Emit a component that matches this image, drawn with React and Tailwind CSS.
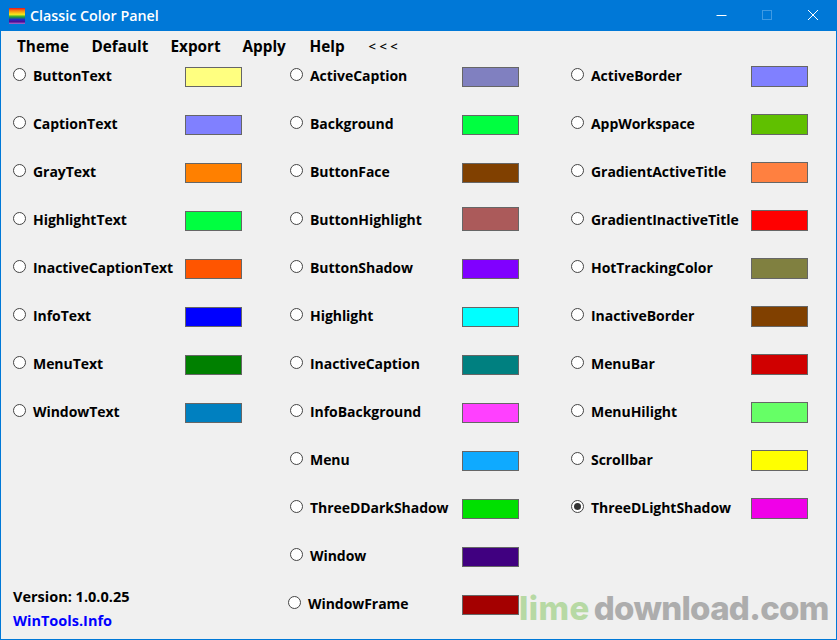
import React from 'react';

const col1 = [
  ['ButtonText', '#ffff80'],
  ['CaptionText', '#8080ff'],
  ['GrayText', '#ff8000'],
  ['HighlightText', '#00ff40'],
  ['InactiveCaptionText', '#ff5500'],
  ['InfoText', '#0000ff'],
  ['MenuText', '#008000'],
  ['WindowText', '#0080c0'],
];

const col2 = [
  ['ActiveCaption', '#8080c0'],
  ['Background', '#00ff40'],
  ['ButtonFace', '#804000'],
  ['ButtonHighlight', '#ab5a5a', 'tall'],
  ['ButtonShadow', '#8000ff'],
  ['Highlight', '#00ffff'],
  ['InactiveCaption', '#008080'],
  ['InfoBackground', '#ff40ff'],
  ['Menu', '#0faaff'],
  ['ThreeDDarkShadow', '#00e000'],
  ['Window', '#400080'],
  ['WindowFrame', '#a40000', 'shift'],
];

const col3 = [
  ['ActiveBorder', '#8080ff'],
  ['AppWorkspace', '#60c000'],
  ['GradientActiveTitle', '#ff8040'],
  ['GradientInactiveTitle', '#ff0000'],
  ['HotTrackingColor', '#808040'],
  ['InactiveBorder', '#804000'],
  ['MenuBar', '#d00000'],
  ['MenuHilight', '#66ff66'],
  ['Scrollbar', '#ffff00'],
  ['ThreeDLightShadow', '#f000e8', 'checked'],
];

function Radio({ checked }) {
  return (
    <span className="w-[13px] h-[13px] -mt-[1px] rounded-full border border-[#444] bg-white flex items-center justify-center shrink-0">
      {checked && <span className="w-[7px] h-[7px] rounded-full bg-[#333]" />}
    </span>
  );
}

function ColorRow({ name, color, flag, labelWidth, big }) {
  const shift = flag === 'shift';
  let swatch = 'h-[20px]';
  if (flag === 'tall') swatch = 'h-[24px] -mt-[4px]';
  if (big) swatch = 'h-[21px] -mt-px';
  return (
    <div className="h-12 flex items-start">
      <div
        className={`flex items-center h-[20px] -mt-[2px] ${shift ? '-ml-0.5' : ''}`}
        style={{ width: shift ? labelWidth + 2 : labelWidth }}
      >
        <Radio checked={flag === 'checked'} />
        <span className="ml-[7px] whitespace-nowrap">{name}</span>
      </div>
      <div className={`w-[57px] border border-[#666] ${swatch}`} style={{ backgroundColor: color }} />
    </div>
  );
}

function Column({ items, labelWidth, big, className }) {
  return (
    <div className={className}>
      {items.map(([name, color, flag]) => (
        <ColorRow key={name} name={name} color={color} flag={flag} labelWidth={labelWidth} big={big} />
      ))}
    </div>
  );
}

export default function App() {
  return (
    <div className="relative w-[837px] h-[640px] bg-[#f0f0f0] border border-[#0078d7] border-t-0 flex flex-col overflow-hidden text-black font-bold text-[14px] tracking-[-0.05px] font-['Open_Sans','Noto_Sans',sans-serif]">
      {/* Title bar */}
      <div className="h-[31px] bg-[#0078d7] -mx-px flex items-center shrink-0 text-white tracking-normal">
        <svg className="ml-[9px] shrink-0" width="16" height="16" viewBox="0 0 16 16">
          <defs>
            <linearGradient id="rainbow" x1="0" y1="0" x2="0" y2="1">
              <stop offset="0" stopColor="#e8141c" />
              <stop offset="0.18" stopColor="#f58a10" />
              <stop offset="0.4" stopColor="#f8e81c" />
              <stop offset="0.55" stopColor="#20a830" />
              <stop offset="0.72" stopColor="#1c2cc8" />
              <stop offset="0.86" stopColor="#500a90" />
              <stop offset="1" stopColor="#b070d0" />
            </linearGradient>
          </defs>
          <rect width="16" height="16" fill="url(#rainbow)" />
        </svg>
        <span className="ml-[5px] text-[14.3px] font-semibold">Classic Color Panel</span>
        <div className="ml-auto flex items-center">
          <svg width="46" height="31" viewBox="0 0 46 31"><path d="M17.5 15.5h10" stroke="#fff" fill="none" /></svg>
          <svg width="46" height="31" viewBox="0 0 46 31"><rect x="17.5" y="10.5" width="9" height="9" stroke="#3f9ae3" fill="none" /></svg>
          <svg width="46" height="31" viewBox="0 0 46 31"><path d="M17 10l10 10M27 10l-10 10" stroke="#fff" fill="none" /></svg>
        </div>
      </div>

      {/* Menu */}
      <div className="h-[25px] mt-[3px] flex items-center pl-4 text-[15.3px] tracking-normal shrink-0">
        <span className="w-[74.5px]">Theme</span>
        <span className="w-[79px]">Default</span>
        <span className="w-[72px]">Export</span>
        <span className="w-[67px]">Apply</span>
        <span className="w-[59px]">Help</span>
        <span className="text-[13px] font-semibold tracking-[3.5px]">{'<<<'}</span>
      </div>

      {/* Color columns */}
      <div className="flex pl-3 pt-[8px] flex-1">
        <Column items={col1} labelWidth={172} className="w-[277px]" />
        <Column items={col2} labelWidth={172} className="w-[281px]" />
        <Column items={col3} labelWidth={180} big className="w-[240px]" />
      </div>

      {/* Footer */}
      <div className="absolute left-3 top-[585px] leading-[24px] text-[14.5px] tracking-normal">
        <div>Version: 1.0.0.25</div>
        <div className="text-[#0000ff]">WinTools.Info</div>
      </div>

      {/* Watermark */}
      <div className="absolute left-[518px] top-[584px] text-[33px] font-['Inter',sans-serif] font-extrabold leading-[48px] whitespace-nowrap">
        <span className="text-[#b7d9a4] tracking-[0.4px]">lime</span>
        <span className="text-[#adadad] ml-[4px] tracking-[-0.7px]">download.com</span>
      </div>
    </div>
  );
}
